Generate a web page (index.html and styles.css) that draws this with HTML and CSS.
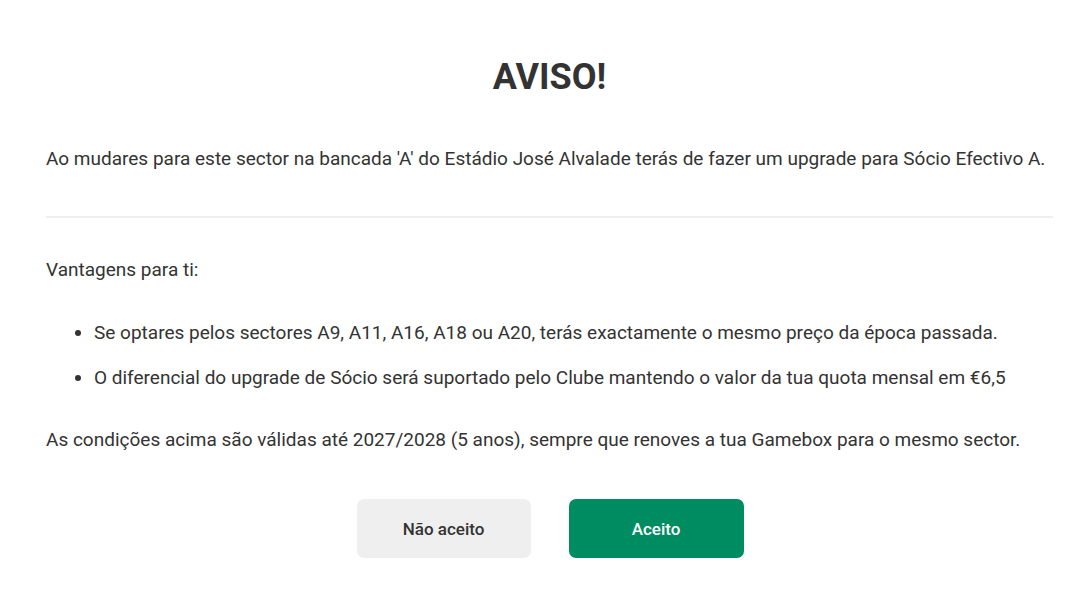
FILE: index.html
```html
<!DOCTYPE html>
<html lang="pt">
<head>
<meta charset="utf-8">
<title>Aviso</title>
<link rel="stylesheet" href="styles.css">
</head>
<body>
<main class="modal">
  <h1 class="title">AVISO!</h1>
  <p class="lead">Ao mudares para este sector na bancada 'A' do Estádio José Alvalade terás de fazer um upgrade para Sócio Efectivo A.</p>
  <hr class="divider">
  <p class="sub">Vantagens para ti:</p>
  <ul class="list">
    <li>Se optares pelos sectores A9, A11, A16, A18 ou A20, terás exactamente o mesmo preço da época passada.</li>
    <li>O diferencial do upgrade de Sócio será suportado pelo Clube mantendo o valor da tua quota mensal em €6,5</li>
  </ul>
  <p class="note">As condições acima são válidas até 2027/2028 (5 anos), sempre que renoves a tua Gamebox para o mesmo sector.</p>
  <div class="actions">
    <button class="btn btn-secondary">Não aceito</button>
    <button class="btn btn-primary">Aceito</button>
  </div>
</main>
</body>
</html>
```
FILE: styles.css
```css
* { box-sizing: border-box; }
html, body { margin: 0; padding: 0; background: #fff; }
body {
  font-family: Roboto, "Liberation Sans", sans-serif;
  color: #333333;
  font-size: 19px;
}
.modal {
  width: 1007px;
  margin-left: 46px;
  padding-top: 55px;
}
.title {
  margin: 0;
  text-align: center;
  font-size: 36px;
  font-weight: 700;
  line-height: 44px;
  color: #333;
}
.lead {
  margin: 48px 0 0;
  line-height: 24px;
}
.divider {
  border: 0;
  height: 2px;
  background: #efefef;
  margin: 45px 0 0;
}
.sub {
  margin: 40px 0 0;
  line-height: 24px;
}
.list {
  margin: 39px 0 0;
  padding-left: 48px;
  line-height: 24px;
}
.list li { margin-bottom: 21px; }
.list li:last-child { margin-bottom: 0; }
.note {
  margin: 38px 0 0;
  line-height: 24px;
}
.actions {
  display: flex;
  justify-content: center;
  gap: 38px;
  margin-top: 47px;
}
.btn {
  font-family: inherit;
  font-size: 17px;
  font-weight: 500;
  border: 0;
  border-radius: 7px;
  width: 174px;
  height: 59px;
}
.btn-secondary { background: #efefef; color: #333; margin-left: 1px; }
.btn-primary { background: #008c61; color: #fff; width: 175px; }
```
